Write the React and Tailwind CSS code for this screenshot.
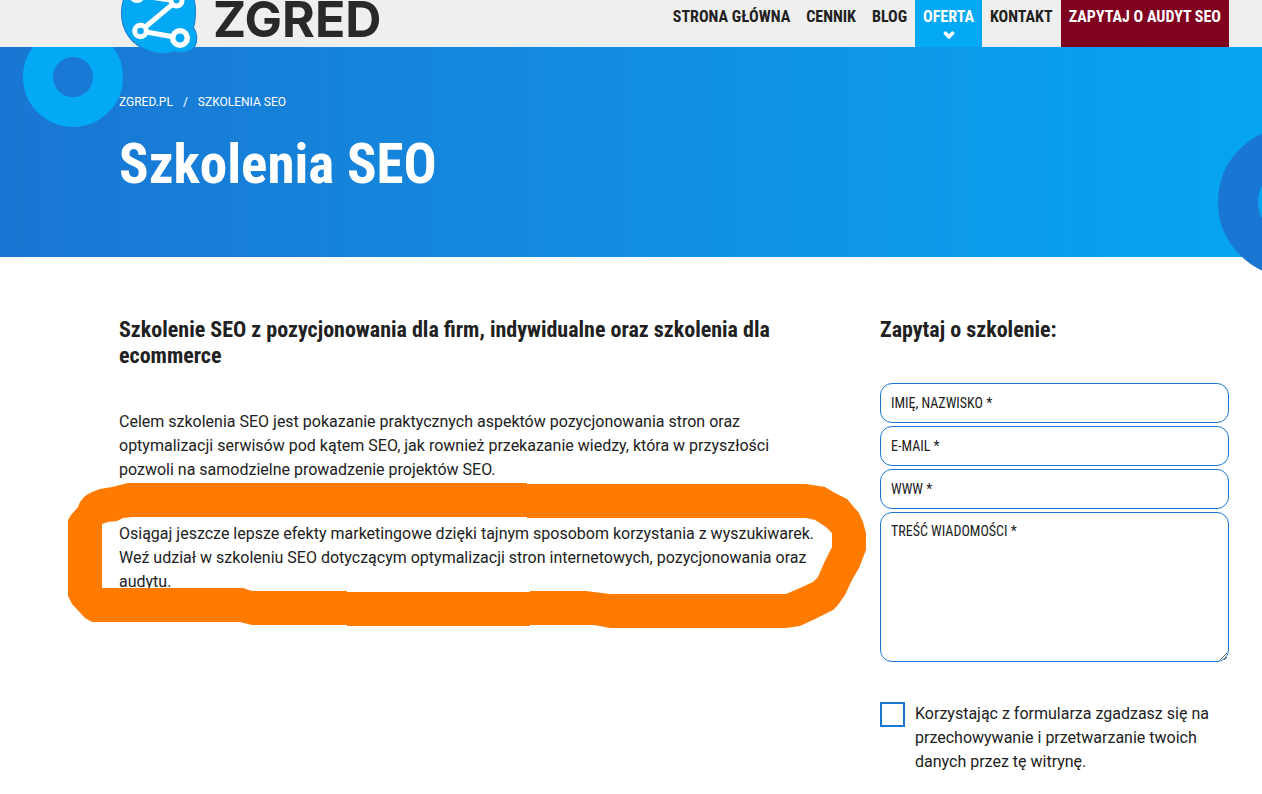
import React, { useState } from 'react';
import clsx from 'clsx';

const navItems = [
  { label: 'STRONA GŁÓWNA' },
  { label: 'CENNIK' },
  { label: 'BLOG' },
  { label: 'OFERTA', active: true },
  { label: 'KONTAKT' },
  { label: 'ZAPYTAJ O AUDYT SEO', cta: true }
];

const fields = [
  { name: 'fullname', type: 'text', label: 'IMIĘ, NAZWISKO *' },
  { name: 'email', type: 'email', label: 'E-MAIL *' },
  { name: 'www', type: 'text', label: 'WWW *' }
];

const Logo = () => (
  <a href="#" className="relative z-10 flex items-start gap-[14px]" aria-label="ZGRED">
    <svg className="w-20 h-[54px] shrink-0" viewBox="0 0 80 54" aria-hidden="true">
      <path
        d="M40 -26C61 -26 76.500 -10 76.500 11C76.500 18 75.500 24 74.500 28C78 32 78.500 40 76.500 45C73 52 63 54 56 51.500C49 54 39 54 31 51C13 46 2.500 31 2.500 13C2.500 -9 19 -26 40 -26Z"
        fill="#03a9f4"
        stroke="#1b84d8"
        strokeWidth="1.2"
      />
      <path d="M18 -5L57.500 1L21.500 31L61 38" fill="none" stroke="#fff" strokeWidth="5" />
      <circle cx="18" cy="-5" r="5.500" fill="#03a9f4" stroke="#fff" strokeWidth="5" />
      <circle cx="57.500" cy="0.500" r="5.500" fill="#03a9f4" stroke="#fff" strokeWidth="5" />
      <circle cx="21.500" cy="31" r="5.800" fill="#03a9f4" stroke="#fff" strokeWidth="5" />
      <circle cx="61" cy="38" r="7.300" fill="#03a9f4" stroke="#fff" strokeWidth="5.500" />
    </svg>
    <span className="font-['Inter',sans-serif] text-[50px] leading-[38px] font-bold text-[#282a29]">ZGRED</span>
  </a>
);

const Header = () => (
  <header className="flex h-[47px] items-start justify-between bg-[#efefef] pl-[119px] pr-[33px]">
    <Logo />
    <nav className="flex h-full font-['Roboto_Condensed','Liberation_Sans_Narrow',sans-serif] text-base font-bold">
      {navItems.map((item) => (
        <a
          key={item.label}
          href="#"
          className={clsx(
            'flex flex-col items-center px-2 pt-[5px] whitespace-nowrap',
            item.active && 'bg-[#03a9f4] text-white',
            item.cta && 'bg-[#80001f] text-white',
            !item.active && !item.cta && 'text-[#212121]'
          )}
        >
          {item.label}
          {item.active && (
            <svg className="mt-[2px] h-2 w-3" viewBox="0 0 12 8" fill="none" stroke="#fff" strokeWidth="3.6" aria-hidden="true">
              <path d="M2.500 2.200L6 5.700L9.500 2.200" strokeLinecap="round" />
            </svg>
          )}
        </a>
      ))}
    </nav>
  </header>
);

const Hero = () => (
  <section className="relative h-[210px] bg-linear-to-r from-[#1976d2] to-[#05a5f1] pl-[119px] pt-11 text-white">
    <div className="absolute inset-x-0 top-0 h-[230px] overflow-hidden">
      <div className="absolute -top-5 left-[23px] size-[100px] rounded-full border-[30px] border-[#03a9f4]" />
      <div className="absolute -right-[106px] top-20 size-[150px] rounded-full border-[40px] border-[#1976d2]" />
    </div>
    <nav className="relative flex gap-[10px] text-xs leading-[22px]">
      <a href="#">ZGRED.PL</a>
      <span>/</span>
      <a href="#">SZKOLENIA SEO</a>
    </nav>
    <h1 className="relative mt-[17px] font-['Roboto_Condensed','Liberation_Sans_Narrow',sans-serif] text-[55px] leading-[68px] font-bold">
      Szkolenia SEO
    </h1>
  </section>
);

// Hand-drawn marker around the last paragraph
const Marker = () => (
  <svg
    className="pointer-events-none absolute -left-[51px] -top-[39px] h-[145px] w-[798px] max-w-none"
    viewBox="68 483 798 145"
    aria-hidden="true"
  >
    <path
      fill="#ff7b00"
      fillRule="evenodd"
      d="M68 520L71 515L78 507L80 502L85 496L92 492L100 489L112 487L128 483H527V484H806L825 487L835 493L847 499L859 513L863 522L866 533V550L859 568L852 580L845 595L838 605L833 610L815 619L800 626L786 628H610L594 625H530V626H347V625H252L240 622H92L85 618L72 604L68 596ZM102 524L108 522L117 521L123 518L132 517H527V518H806L815 520L826 527L832 533V547L824 563L818 577L813 582L800 588L786 594H610L594 592L586 591H530V592H347V591H252L243 588H102Z"
    />
  </svg>
);

const ContactForm = () => {
  const [values, setValues] = useState({ fullname: '', email: '', www: '', message: '' });
  const [agreed, setAgreed] = useState(false);

  const handleChange = (e) => {
    const { name, value } = e.target;
    setValues((prev) => ({ ...prev, [name]: value }));
  };

  return (
    <form className="mt-10 flex flex-col gap-[3px]">
      {fields.map((field) => (
        <input
          key={field.name}
          type={field.type}
          name={field.name}
          value={values[field.name]}
          onChange={handleChange}
          placeholder={field.label}
          aria-label={field.label}
          className="h-10 w-full rounded-xl border border-[#1976d2] px-[10px] font-['Roboto_Condensed','Liberation_Sans_Narrow',sans-serif] text-sm placeholder:text-[#212121]"
        />
      ))}
      <textarea
        name="message"
        value={values.message}
        onChange={handleChange}
        placeholder="TREŚĆ WIADOMOŚCI *"
        aria-label="TREŚĆ WIADOMOŚCI *"
        className="h-[150px] w-full resize rounded-xl border border-[#1976d2] px-[10px] py-2 font-['Roboto_Condensed','Liberation_Sans_Narrow',sans-serif] text-sm placeholder:text-[#212121]"
      />
      <div className="mt-[37px] flex items-start gap-[10px]">
        <input
          id="agree"
          type="checkbox"
          checked={agreed}
          onChange={(e) => setAgreed(e.target.checked)}
          className="size-[25px] shrink-0 appearance-none border-2 border-[#1976d2] bg-white checked:bg-[#1976d2]"
        />
        <label htmlFor="agree" className="leading-6">
          Korzystając z formularza zgadzasz się na przechowywanie i przetwarzanie twoich danych przez tę witrynę.
        </label>
      </div>
    </form>
  );
};

const App = () => {
  return (
    <div className="overflow-x-hidden bg-white font-['Roboto',sans-serif] text-base text-[#212121]">
      <Header />
      <Hero />
      <main className="flex justify-between gap-8 pl-[119px] pr-[33px] pt-[60px] pb-5">
        <div className="max-w-[700px] flex-1">
          <h2 className="font-['Roboto_Condensed','Liberation_Sans_Narrow',sans-serif] text-[22px] leading-[26px] font-bold">
            Szkolenie SEO z pozycjonowania dla firm, indywidualne oraz szkolenia dla ecommerce
          </h2>
          <p className="mt-[41px] leading-6">
            Celem szkolenia SEO jest pokazanie praktycznych aspektów pozycjonowania stron oraz optymalizacji serwisów
            pod kątem SEO, jak rownież przekazanie wiedzy, która w przyszłości pozwoli na samodzielne prowadzenie
            projektów SEO.
          </p>
          <div className="relative mt-10">
            <p className="leading-6">
              Osiągaj jeszcze lepsze efekty marketingowe dzięki tajnym sposobom korzystania z wyszukiwarek. Weź udział
              w szkoleniu SEO dotyczącym optymalizacji stron internetowych, pozycjonowania oraz audytu.
            </p>
            <Marker />
          </div>
        </div>
        <aside className="w-[349px] shrink-0">
          <h2 className="font-['Roboto_Condensed','Liberation_Sans_Narrow',sans-serif] text-[22px] leading-[26px] font-bold">
            Zapytaj o szkolenie:
          </h2>
          <ContactForm />
        </aside>
      </main>
    </div>
  );
};

export default App;
